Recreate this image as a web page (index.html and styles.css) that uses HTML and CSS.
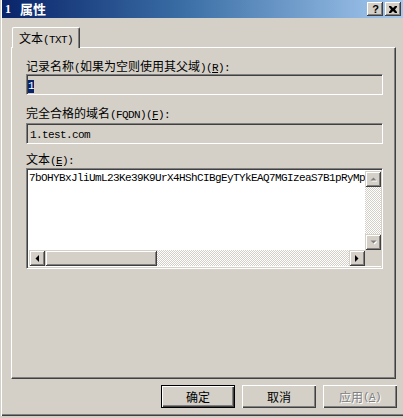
FILE: index.html
```html
<!DOCTYPE html>
<html>
<head>
<meta charset="utf-8">
<title>1 属性</title>
<link rel="stylesheet" href="styles.css">
</head>
<body>
<div class="window">
  <div class="titlebar">
    <span class="title"><span class="tnum">1</span>属性</span>
    <div class="caps">
      <span class="cap help">?</span>
      <span class="cap close"><svg width="8" height="7" viewBox="0 0 8 7"><path d="M0 0h2l2 2 2-2h2v1l-2 2.5 2 2.5v1h-2l-2-2-2 2h-2v-1l2-2.5-2-2.5z" fill="#000"/></svg></span>
    </div>
  </div>
  <div class="content">
    <div class="tabs">
      <div class="tab">文本<span class="m">(TXT)</span></div>
    </div>
    <div class="panel">
      <div class="label">记录名称<span class="m">(</span>如果为空则使用其父域<span class="m">)(<u>R</u>):</span></div>
      <div class="field ro"><span class="sel m">1</span></div>
      <div class="label l2">完全合格的域名<span class="m">(FQDN)(<u>F</u>):</span></div>
      <div class="field ro"><span class="val m">1.test.com</span></div>
      <div class="label l3">文本<span class="m">(<u>E</u>):</span></div>
      <div class="memo">
        <div class="memo-text m">7bOHYBxJliUmL23Ke39K9UrX4HShCIBgEyTYkEAQ7MGIzeaS7B1pRyMp</div>
        <div class="vscroll">
          <span class="sbtn"><svg width="7" height="5" viewBox="0 0 7 5"><path d="M4.5 1.5l3 3h-6z" fill="#fff"/><path d="M3.5 0.5l3 3h-6z" fill="#808080"/></svg></span>
          <span class="track"></span>
          <span class="sbtn"><svg width="7" height="5" viewBox="0 0 7 5"><path d="M1.5 1.5h6l-3 3z" fill="#fff"/><path d="M0.5 0.5h6l-3 3z" fill="#808080"/></svg></span>
        </div>
        <div class="hscroll">
          <span class="sbtn"><svg width="4" height="7" viewBox="0 0 4 7"><path d="M4 0v7l-3.5-3.5z" fill="#000"/></svg></span>
          <span class="thumb"></span>
          <span class="track"></span>
          <span class="sbtn"><svg width="4" height="7" viewBox="0 0 4 7"><path d="M0 0v7l3.5-3.5z" fill="#000"/></svg></span>
        </div>
        <div class="corner"></div>
      </div>
    </div>
    <div class="buttons">
      <div class="btn default"><span class="face">确定</span></div>
      <div class="btn"><span class="face">取消</span></div>
      <div class="btn disabled"><span class="face">应用<span class="m">(<u>A</u>)</span></span></div>
    </div>
  </div>
</div>
</body>
</html>
```

FILE: styles.css
```css
* { box-sizing: border-box; }
html, body { margin: 0; padding: 0; }
body {
  width: 403px;
  height: 418px;
  overflow: hidden;
  background: #d4d0c8;
  font-family: "Noto Sans CJK SC", "Liberation Sans", sans-serif;
  font-size: 12px;
  color: #000;
}
.m {
  font-family: "Liberation Mono", "Noto Sans CJK SC", monospace;
  font-size: 11px;
  letter-spacing: -0.6px;
}
u { text-decoration: underline; }

.window {
  width: 406px;
  height: 416px;
  background: #d4d0c8;
  border-left: 1px solid #d4d0c8;
  padding: 0 1px 0 1px;
  box-shadow: inset 1px 0 #fff, inset 0 -1px #404040, inset 0 -2px #808080;
}

.titlebar {
  height: 18px;
  display: flex;
  align-items: center;
  justify-content: space-between;
  background: linear-gradient(to right, #0a246a 0%, #3a6ea5 45%, #a6caf0 100%);
  padding: 0 4px 0 3px;
}
.title {
  color: #fff;
  font-weight: bold;
  font-size: 13px;
  line-height: 18px;
  display: flex;
  align-items: center;
}
.tnum {
  font-family: "Liberation Serif", serif;
  font-size: 12px;
  margin-right: 9px;
}
.caps { display: flex; gap: 2px; }
.cap {
  width: 16px;
  height: 14px;
  background: #d4d0c8;
  box-shadow: inset -1px -1px #404040, inset 1px 1px #fff, inset -2px -2px #808080;
  display: flex;
  align-items: center;
  justify-content: center;
}
.help {
  font-family: "Liberation Sans", sans-serif;
  font-weight: bold;
  font-size: 11px;
  line-height: 14px;
  padding-left: 1px;
}
.close svg { display: block; }

.content { padding-top: 9px; }
.tabs { display: flex; padding-left: 10px; }
.tab {
  position: relative;
  z-index: 1;
  height: 21px;
  margin-bottom: -1px;
  padding: 3px 6px 0 6px;
  background: #d4d0c8;
  border-top: 1px solid #fff;
  border-left: 1px solid #fff;
  border-right: 1px solid #404040;
  box-shadow: inset -1px 0 #808080;
  border-radius: 2px 2px 0 0;
  line-height: 14px;
}

.panel {
  margin-left: 9px;
  width: 385px;
  height: 332px;
  border-top: 1px solid #fff;
  border-left: 1px solid #fff;
  border-right: 1px solid #404040;
  border-bottom: 1px solid #404040;
  box-shadow: inset -1px -1px #808080;
  padding: 11px 0 0 14px;
}
.label { height: 13px; line-height: 13px; white-space: nowrap; }
.l2 { margin-top: 11px; }
.l3 { margin-top: 8px; }

.field {
  margin-top: 2px;
  width: 357px;
  height: 21px;
  border: 1px solid;
  border-color: #808080 #fff #fff #808080;
  box-shadow: inset 1px 1px #404040, inset -1px -1px #d4d0c8;
  padding: 2px 0 0 1px;
  line-height: 13px;
}
.l2 + .field { margin-top: 4px; }
.ro { background: #d4d0c8; }
.sel {
  display: inline-block;
  background: #0a246a;
  color: #fff;
  height: 13px;
  line-height: 13px;
  width: 6px;
}
.val { padding-left: 2px; line-height: 14px; }

.memo {
  margin-top: 3px;
  width: 357px;
  height: 101px;
  background: #fff;
  border: 1px solid;
  border-color: #808080 #fff #fff #808080;
  box-shadow: inset 1px 1px #404040, inset -1px -1px #d4d0c8;
  padding: 2px 1px 2px 2px;
  display: grid;
  grid-template-columns: 1fr 16px;
  grid-template-rows: 1fr 16px;
}
.memo-text {
  padding: 1px 0 0 0;
  line-height: 13px;
  white-space: nowrap;
  overflow: hidden;
}
.vscroll, .hscroll { display: flex; }
.vscroll { flex-direction: column; }
.sbtn {
  flex: 0 0 16px;
  width: 16px;
  height: 16px;
  background: #d4d0c8;
  box-shadow: inset 1px 1px #d4d0c8, inset -1px -1px #404040, inset 2px 2px #fff, inset -2px -2px #808080;
  display: flex;
  align-items: center;
  justify-content: center;
}
.sbtn svg { display: block; }
.track {
  flex: 1;
  background: repeating-conic-gradient(#fff 0 25%, #d4d0c8 0 50%) 0 0 / 2px 2px;
}
.thumb {
  flex: 0 0 112px;
  background: #d4d0c8;
  box-shadow: inset 1px 1px #d4d0c8, inset -1px -1px #404040, inset 2px 2px #fff, inset -2px -2px #808080;
}
.corner { background: #d4d0c8; }

.buttons {
  display: flex;
  justify-content: flex-end;
  gap: 7px;
  padding-right: 8px;
  margin-top: 6px;
}
.btn {
  width: 74px;
  height: 23px;
  background: #d4d0c8;
  box-shadow: inset 1px 1px #fff, inset -1px -1px #404040, inset -2px -2px #808080;
  display: flex;
}
.face {
  flex: 1;
  display: flex;
  align-items: center;
  justify-content: center;
  line-height: 14px;
}
.default {
  border: 1px solid #000;
  box-shadow: none;
}
.default .face {
  box-shadow: inset 1px 1px #fff, inset -1px -1px #404040, inset -2px -2px #808080;
}
.disabled .face { color: #808080; text-shadow: 1px 1px #fff; }
```
